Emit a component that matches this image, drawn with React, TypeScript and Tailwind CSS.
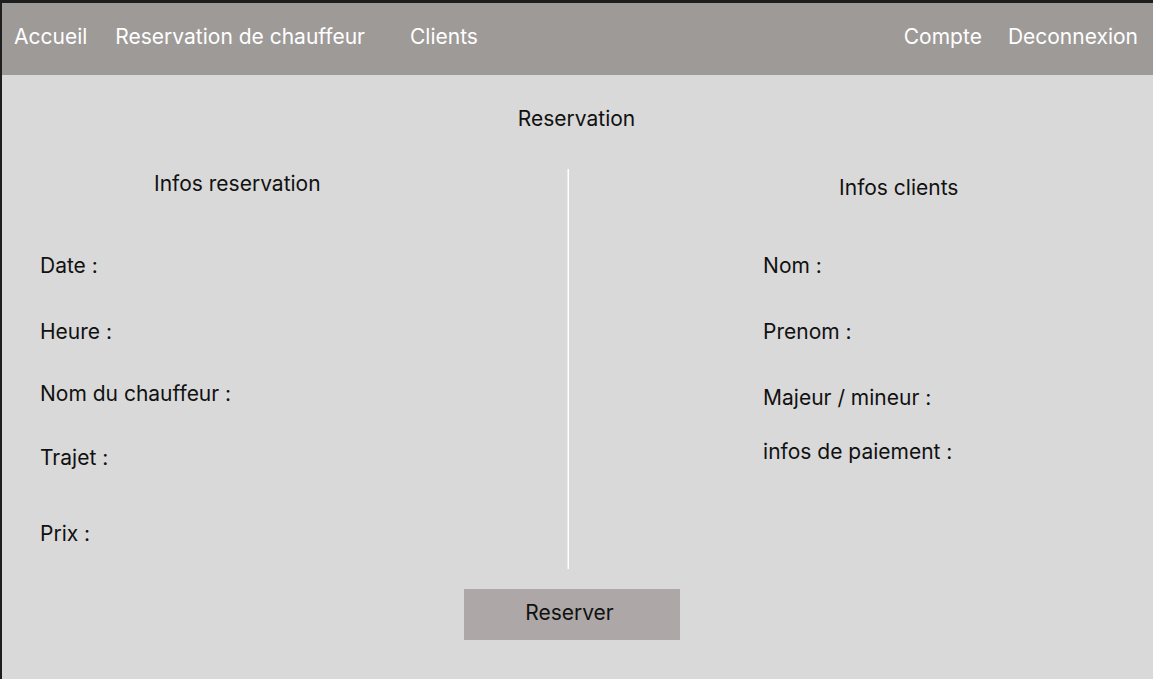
import React from "react";

const bookingRows = [
  { label: "Date :", gap: "mt-14" },
  { label: "Heure :", gap: "mt-10" },
  { label: "Nom du chauffeur :", gap: "mt-9" },
  { label: "Trajet :", gap: "mt-[38px]" },
  { label: "Prix :", gap: "mt-[50px]" },
];

const clientRows = [
  { label: "Nom :", gap: "mt-13" },
  { label: "Prenom :", gap: "mt-10" },
  { label: "Majeur / mineur :", gap: "mt-10" },
  { label: "infos de paiement :", gap: "mt-7" },
];

export default function App() {
  return (
    <div className="flex min-h-screen flex-col border-t-3 border-l-2 border-[#1e1e1e] bg-[#d9d9d9] font-['Inter',sans-serif] text-[21px] leading-[26px] text-[#111111]">
      <nav className="flex h-18 items-center justify-between bg-[#9e9a98] pr-[15px] pb-1 pl-3 text-white">
        <div className="flex">
          <a href="#accueil">Accueil</a>
          <a href="#reservation" className="ml-7">Reservation de chauffeur</a>
          <a href="#clients" className="ml-[45px]">Clients</a>
        </div>
        <div className="flex gap-[26px]">
          <a href="#compte">Compte</a>
          <a href="#deconnexion">Deconnexion</a>
        </div>
      </nav>
      <main className="flex flex-col">
        <h1 className="mt-[31px] pr-[2px] text-center">Reservation</h1>
        <div className="mt-[37px] grid grid-cols-[30fr_2px_31fr]">
          <section className="pt-[2px] pl-[38px]">
            <h2 className="pl-[114px]">Infos reservation</h2>
            {bookingRows.map((row) => (
              <p key={row.label} className={row.gap}>{row.label}</p>
            ))}
          </section>
          <div className="h-[400px] border-r border-l border-r-white border-l-[#ececec]" />
          <section className="pt-[6px] pl-[194px]">
            <h2 className="pl-[76px]">Infos clients</h2>
            {clientRows.map((row) => (
              <p key={row.label} className={row.gap}>{row.label}</p>
            ))}
          </section>
        </div>
        <button type="button" className="mt-5 mr-3 h-[51px] w-[216px] self-center bg-[#ada7a7] pr-1 pb-1">
          Reserver
        </button>
      </main>
    </div>
  );
}
